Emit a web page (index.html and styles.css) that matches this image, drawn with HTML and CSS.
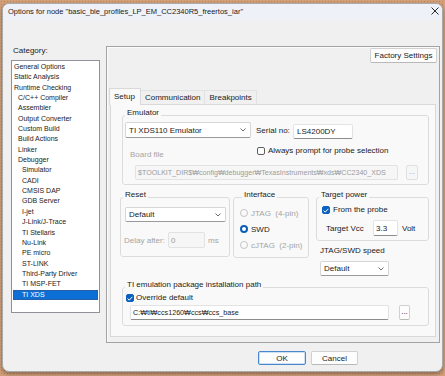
FILE: index.html
```html
<!DOCTYPE html>
<html lang="en">
<head>
  <meta charset="UTF-8">
  <meta name="viewport" content="width=device-width, initial-scale=1.0">
  <title>Options for node</title>
  <link rel="stylesheet" href="styles.css">
</head>
<body>

<div class="dialog">
  <div class="titlebar">
    <span class="title">Options for node "basic_ble_profiles_LP_EM_CC2340R5_freertos_iar"</span>
    <svg class="close" width="8" height="8" viewBox="0 0 8 8"><path d="M0.5 0.5L7.5 7.5M7.5 0.5L0.5 7.5" stroke="#2b2b2b" stroke-width="1"/></svg>
  </div>

  <div class="dialog-body">
    <div class="category">
      <div class="category-label">Category:</div>
      <ul class="category-list">
        <li>General Options</li>
        <li>Static Analysis</li>
        <li>Runtime Checking</li>
        <li class="lvl1">C/C++ Compiler</li>
        <li class="lvl1">Assembler</li>
        <li class="lvl1">Output Converter</li>
        <li class="lvl1">Custom Build</li>
        <li class="lvl1">Build Actions</li>
        <li class="lvl1">Linker</li>
        <li class="lvl1">Debugger</li>
        <li class="lvl2">Simulator</li>
        <li class="lvl2">CADI</li>
        <li class="lvl2">CMSIS DAP</li>
        <li class="lvl2">GDB Server</li>
        <li class="lvl2">I-jet</li>
        <li class="lvl2">J-Link/J-Trace</li>
        <li class="lvl2">TI Stellaris</li>
        <li class="lvl2">Nu-Link</li>
        <li class="lvl2">PE micro</li>
        <li class="lvl2">ST-LINK</li>
        <li class="lvl2">Third-Party Driver</li>
        <li class="lvl2">TI MSP-FET</li>
        <li class="lvl2 selected">TI XDS</li>
      </ul>
    </div>

    <div class="options-panel">
      <div class="panel-top">
        <div class="btn factory">Factory Settings</div>
      </div>

      <div class="tabs">
        <div class="tab active">Setup</div>
        <div class="tab">Communication</div>
        <div class="tab">Breakpoints</div>
      </div>

      <div class="tab-page">
        <fieldset class="group emulator-group">
          <legend>Emulator</legend>
          <div class="emu-row">
            <div class="combo emu-combo">TI XDS110 Emulator
              <svg class="chevron" width="6" height="4" viewBox="0 0 6 4"><path d="M0.5 0.5L3 3L5.5 0.5" fill="none" stroke="#6e6e6e"/></svg>
            </div>
            <span class="serial-label">Serial no:</span>
            <div class="textbox serial-box">LS4200DY</div>
          </div>
          <div class="board-row">
            <span class="disabled board-label">Board file</span>
            <div class="check-item">
              <span class="checkbox"></span>Always prompt for probe selection
            </div>
          </div>
          <div class="path-row">
            <div class="textbox is-disabled board-path">$TOOLKIT_DIR$₩config₩debugger₩TexasInstruments₩xds₩CC2340_XDS</div>
            <div class="btn browse is-disabled board-browse">...</div>
          </div>
        </fieldset>

        <div class="mid-row">
          <fieldset class="group reset-group">
            <legend>Reset</legend>
            <div class="combo reset-combo">Default
              <svg class="chevron" width="6" height="4" viewBox="0 0 6 4"><path d="M0.5 0.5L3 3L5.5 0.5" fill="none" stroke="#6e6e6e"/></svg>
            </div>
            <div class="delay-row">
              <span class="disabled delay-label">Delay after:</span>
              <div class="textbox is-disabled delay-box">0</div>
              <span class="disabled ms">ms</span>
            </div>
          </fieldset>

          <fieldset class="group iface-group">
            <legend>Interface</legend>
            <div class="radio-item disabled"><span class="radio"></span>JTAG&nbsp;&nbsp;(4-pin)</div>
            <div class="radio-item"><span class="radio on"></span>SWD</div>
            <div class="radio-item disabled"><span class="radio"></span>cJTAG&nbsp;&nbsp;(2-pin)</div>
          </fieldset>

          <div class="power-col">
            <fieldset class="group power-group">
              <legend>Target power</legend>
              <div class="check-item probe">
                <span class="checkbox on"><svg width="6" height="5" viewBox="0 0 6 5"><path d="M0.6 2.6L2.2 4.1L5.4 0.8" fill="none" stroke="#fff" stroke-width="1"/></svg></span>From the probe
              </div>
              <div class="vcc-row">
                <span class="vcc-label">Target Vcc</span>
                <div class="textbox vcc-box">3.3</div>
                <span class="volt">Volt</span>
              </div>
            </fieldset>
            <div class="speed-label">JTAG/SWD speed</div>
            <div class="combo speed-combo">Default
              <svg class="chevron" width="6" height="4" viewBox="0 0 6 4"><path d="M0.5 0.5L3 3L5.5 0.5" fill="none" stroke="#6e6e6e"/></svg>
            </div>
          </div>
        </div>

        <fieldset class="group install-group">
          <legend>TI emulation package installation path</legend>
          <div class="check-item override">
            <span class="checkbox on"><svg width="6" height="5" viewBox="0 0 6 5"><path d="M0.6 2.6L2.2 4.1L5.4 0.8" fill="none" stroke="#fff" stroke-width="1"/></svg></span>Override default
          </div>
          <div class="install-row">
            <div class="textbox install-path">C:₩ti₩ccs1260₩ccs₩ccs_base</div>
            <div class="btn browse install-browse">...</div>
          </div>
        </fieldset>
      </div>
    </div>
  </div>

  <div class="dialog-buttons">
    <div class="btn ok">OK</div>
    <div class="btn cancel">Cancel</div>
  </div>
</div>

</body>
</html>
```

FILE: styles.css
```css
* {
  box-sizing: border-box;
}

body {
  margin: 0;
  width: 445px;
  height: 376px;
  overflow: hidden;
  background-color: #d3a07a;
  background-image: radial-gradient(#b98560 0.7px, transparent 0.9px);
  background-size: 3px 3px;
  font-family: 'Liberation Sans', Arial, 'DejaVu Sans', 'Noto Sans CJK KR', sans-serif;
  font-size: 8px;
  color: #1b1b1b;
}

.dialog {
  margin: 3px 0 0 2px;
  width: 441px;
  height: 369px;
  background-color: #f0f0f0;
  border: 1px solid #a9a9a9;
  border-radius: 7px;
  box-shadow: 0 2px 4px rgba(0, 0, 0, 0.35);
  overflow: hidden;
  display: flex;
  flex-direction: column;
}

.titlebar {
  height: 16px;
  flex: none;
  background-color: #eff1f8;
  display: flex;
  align-items: center;
  justify-content: space-between;
  padding: 0 3px 0 5px;
  font-size: 7.5px;
}

.title {
  margin-top: -1px;
}

.close {
  margin-top: -2px;
}

.dialog-body {
  display: grid;
  grid-template-columns: 89px 334px;
  column-gap: 6px;
  padding: 26px 0 0 8px;
}

/* category tree */

.category-label {
  line-height: 10px;
  margin: 0 0 4px 2px;
}

.category-list {
  list-style: none;
  margin: 0;
  padding: 1px 0 0;
  height: 253px;
  background: #fff;
  border: 1px solid #8f9399;
  font-size: 7px;
}

.category-list li {
  line-height: 10.35px;
  height: 10.35px;
  padding-left: 2px;
  white-space: nowrap;
}

.category-list .lvl1 {
  padding-left: 6px;
}

.category-list .lvl2 {
  padding-left: 10px;
}

.category-list .selected {
  margin: 0 1px;
  padding-left: 9px;
  background: #0b6fd6;
  color: #fff;
  box-shadow: inset 0 0 0 1px #2660a8;
}

/* right panel */

.options-panel {
  height: 297px;
  border: 1px solid #a3a3a3;
  box-shadow: inset 1px 1px 0 #fbfbfb;
  display: flex;
  flex-direction: column;
}

.panel-top {
  display: flex;
  justify-content: flex-end;
  padding: 1px 2px 0 0;
}

.btn {
  display: flex;
  align-items: center;
  justify-content: center;
  background: #fdfdfd;
  border: 1px solid #d0d0d0;
  border-bottom-color: #b8b8b8;
  border-radius: 2px;
}

.factory {
  width: 67px;
  height: 15px;
}

.tabs {
  margin-top: 26px;
  padding-left: 2px;
  height: 16px;
  display: flex;
  align-items: flex-end;
  margin-bottom: -1px;
}

.tab {
  height: 15px;
  line-height: 14px;
  padding: 0 4px;
  border: 1px solid #e2e2e2;
  border-bottom: none;
  border-left: none;
}

.tab.active {
  position: relative;
  height: 17px;
  line-height: 16px;
  padding: 0 5px 0 4px;
  background: #f9f9f9;
  border: 1px solid #d9d9d9;
  border-bottom: none;
}

.tab-page {
  flex: 1;
  margin: 0 3px 5px;
  background: #f9f9f9;
  border: 1px solid #d9d9d9;
  padding: 3px 6px 0 9px;
}

/* group boxes */

.group {
  margin: 0;
  padding: 0;
  min-width: 0;
  border: 1px solid #dcdcdc;
  border-radius: 3px;
}

.group legend {
  margin-left: 2px;
  padding: 0 2px 4px;
  line-height: 10px;
}

.disabled {
  color: #a4a4a4;
}

.textbox {
  display: flex;
  align-items: center;
  padding-left: 3px;
  background: #fff;
  border: 1px solid #e3e3e3;
  border-bottom-color: #8c8c8c;
  border-radius: 2px;
  white-space: nowrap;
  overflow: hidden;
}

.textbox.is-disabled {
  background: #f6f6f6;
  border-color: #e2e2e2;
  color: #9c9c9c;
  padding-left: 2px;
}

.combo {
  display: flex;
  align-items: center;
  justify-content: space-between;
  padding: 0 4px 0 3px;
  background: #fff;
  border: 1px solid #d6d6d6;
  border-bottom-color: #9a9a9a;
  border-radius: 2px;
}

.checkbox {
  width: 8px;
  height: 8px;
  flex: none;
  border: 1px solid #5f5f5f;
  border-radius: 2px;
  background: #fff;
  display: flex;
  align-items: center;
  justify-content: center;
}

.checkbox.on {
  background: #0a62bd;
  border-color: #0a62bd;
}

.check-item {
  display: flex;
  align-items: center;
  gap: 3px;
  line-height: 10px;
}

/* emulator */

.emulator-group {
  margin-left: 2px;
}

.emu-row {
  display: flex;
  align-items: flex-start;
}

.emu-combo {
  margin-left: 2px;
  width: 126px;
  height: 16px;
}

.serial-label {
  margin: 1px 0 0 5px;
  width: 37px;
  line-height: 16px;
}

.serial-box {
  margin-top: 2px;
  width: 60px;
  height: 15px;
}

.board-row {
  display: flex;
  align-items: flex-start;
  margin-top: 7px;
}

.board-label {
  margin: 4px 0 0 7px;
  width: 127px;
  line-height: 10px;
}

.path-row {
  display: flex;
  margin: 5px 0 4px;
}

.board-path {
  margin-left: 12px;
  width: 263px;
  height: 15px;
  font-size: 7.1px;
}

.browse {
  height: 15px;
  padding-bottom: 3px;
}

.browse.is-disabled {
  background: #f6f6f6;
  border-color: #e0e0e0;
  color: #a8a8a8;
}

.board-browse {
  margin-left: 8px;
  width: 12px;
}

/* reset / interface / power */

.mid-row {
  display: flex;
  align-items: flex-start;
  margin-top: 5px;
}

.reset-group {
  width: 110px;
  padding-bottom: 8px;
}

.reset-combo {
  margin: 3px 0 0 4px;
  width: 101px;
  height: 15px;
}

.delay-row {
  display: flex;
  align-items: center;
  margin: 10px 0 0 3px;
}

.delay-label {
  width: 44px;
}

.delay-box {
  width: 37px;
  height: 16px;
}

.ms {
  margin-left: 3px;
}

.iface-group {
  margin-left: 3px;
  width: 76px;
  padding: 1px 0 4px 6px;
}

.radio-item {
  display: flex;
  align-items: center;
  gap: 3px;
  height: 16px;
  white-space: nowrap;
}

.radio {
  width: 8px;
  height: 8px;
  border: 1px solid #c4c4c4;
  border-radius: 50%;
  background: #fafafa;
}

.radio.on {
  border: 2.5px solid #0a5fb8;
  background: #fff;
}

.power-col {
  margin-left: 7px;
  width: 113px;
}

.power-group {
  padding-bottom: 4px;
}

.probe {
  margin: 1px 0 0 5px;
}

.vcc-row {
  display: flex;
  align-items: center;
  height: 16px;
  margin-top: 5px;
}

.vcc-label {
  margin-left: 9px;
  width: 47px;
}

.vcc-box {
  width: 25px;
  height: 16px;
  padding-left: 2px;
}

.volt {
  margin-left: 4px;
}

.speed-label {
  margin: 5px 0 0 4px;
  line-height: 10px;
}

.speed-combo {
  margin: 5px 0 0 4px;
  width: 69px;
  height: 15px;
}

/* install path */

.install-group {
  margin: 4px 0 0 2px;
  padding-bottom: 5px;
}

.override {
  margin-left: 3px;
  gap: 2px;
  line-height: 8px;
}

.install-row {
  display: flex;
  margin-top: 3px;
}

.install-path {
  margin-left: 7px;
  width: 259px;
  height: 15px;
  padding-left: 2px;
  font-size: 7.2px;
}

.install-browse {
  margin-left: 10px;
  width: 11px;
}

/* ok / cancel */

.dialog-buttons {
  display: flex;
  justify-content: flex-end;
  gap: 5px;
  margin-top: 8px;
  padding-right: 84px;
}

.dialog-buttons .btn {
  width: 47px;
  height: 14px;
}

.dialog-buttons .ok {
  width: 48px;
  border-color: #4a86cc;
  box-shadow: inset 0 0 0 1px #cfe0f3;
}
```
